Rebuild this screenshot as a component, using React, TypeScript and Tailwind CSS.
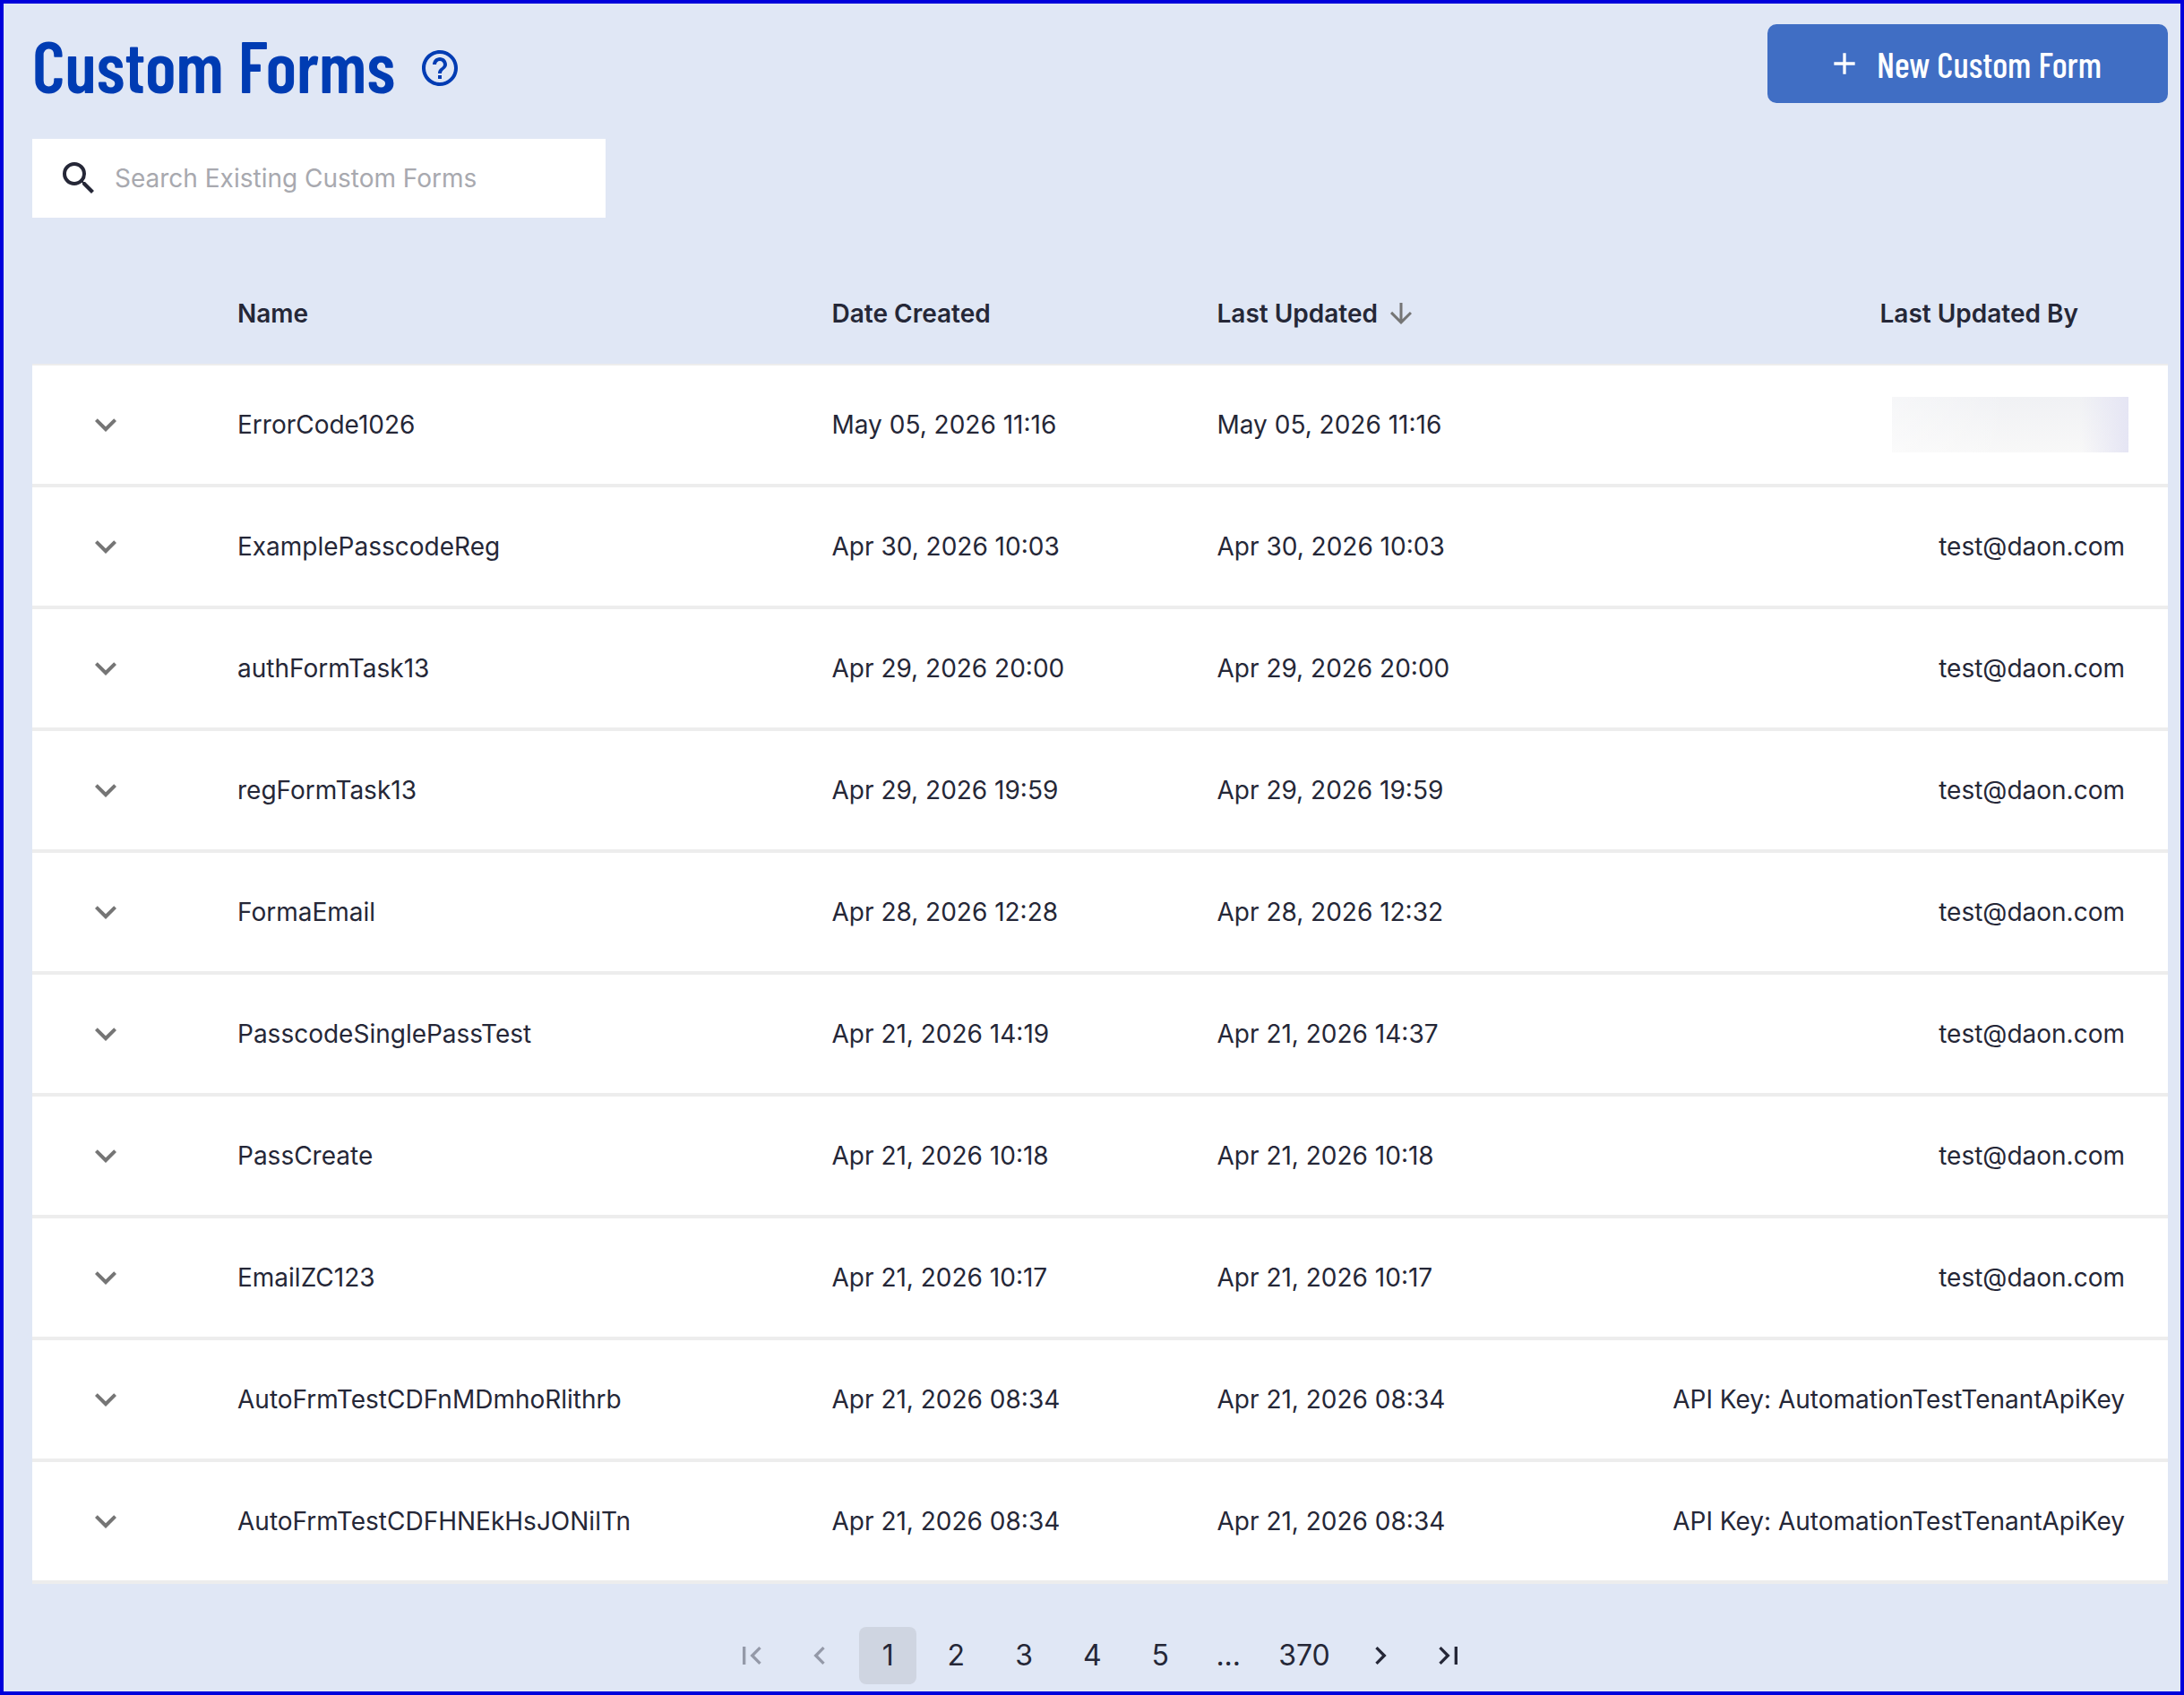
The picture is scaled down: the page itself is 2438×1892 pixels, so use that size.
import { useState } from 'react';
import {
  MdAdd,
  MdArrowDownward,
  MdChevronLeft,
  MdChevronRight,
  MdFirstPage,
  MdHelpOutline,
  MdKeyboardArrowDown,
  MdLastPage,
  MdSearch,
} from 'react-icons/md';

interface CustomForm {
  name: string;
  created: string;
  updated: string;
  // null when the user's address is hidden
  updatedBy: string | null;
}

const forms: CustomForm[] = [
  { name: 'ErrorCode1026', created: 'May 05, 2026 11:16', updated: 'May 05, 2026 11:16', updatedBy: null },
  { name: 'ExamplePasscodeReg', created: 'Apr 30, 2026 10:03', updated: 'Apr 30, 2026 10:03', updatedBy: 'test@daon.com' },
  { name: 'authFormTask13', created: 'Apr 29, 2026 20:00', updated: 'Apr 29, 2026 20:00', updatedBy: 'test@daon.com' },
  { name: 'regFormTask13', created: 'Apr 29, 2026 19:59', updated: 'Apr 29, 2026 19:59', updatedBy: 'test@daon.com' },
  { name: 'FormaEmail', created: 'Apr 28, 2026 12:28', updated: 'Apr 28, 2026 12:32', updatedBy: 'test@daon.com' },
  { name: 'PasscodeSinglePassTest', created: 'Apr 21, 2026 14:19', updated: 'Apr 21, 2026 14:37', updatedBy: 'test@daon.com' },
  { name: 'PassCreate', created: 'Apr 21, 2026 10:18', updated: 'Apr 21, 2026 10:18', updatedBy: 'test@daon.com' },
  { name: 'EmailZC123', created: 'Apr 21, 2026 10:17', updated: 'Apr 21, 2026 10:17', updatedBy: 'test@daon.com' },
  { name: 'AutoFrmTestCDFnMDmhoRlithrb', created: 'Apr 21, 2026 08:34', updated: 'Apr 21, 2026 08:34', updatedBy: 'API Key: AutomationTestTenantApiKey' },
  { name: 'AutoFrmTestCDFHNEkHsJONilTn', created: 'Apr 21, 2026 08:34', updated: 'Apr 21, 2026 08:34', updatedBy: 'API Key: AutomationTestTenantApiKey' },
];

const pages = [1, 2, 3, 4, 5];
const lastPage = 370;

const pageButton = 'flex h-16 min-w-16 items-center justify-center rounded-lg px-3 disabled:opacity-40';

function FormRow({ form }: { form: CustomForm }) {
  return (
    <tr className="h-[136px] bg-white">
      <td className="pl-[58px]">
        <button type="button" aria-label={`Expand ${form.name}`} className="block text-[#757575]">
          <MdKeyboardArrowDown className="size-12" />
        </button>
      </td>
      <td className="px-8">{form.name}</td>
      <td className="px-8">{form.created}</td>
      <td className="px-8">{form.updated}</td>
      <td className="pr-12 pl-8 text-right">
        {form.updatedBy ?? (
          <div className="-mr-1 ml-auto h-[62px] w-[264px] bg-linear-to-b from-[#f0f1f4] to-[#f8f8f8]">
            <div className="h-full bg-linear-to-r from-white/40 via-transparent via-50% to-transparent">
              <div className="h-full bg-linear-to-r from-transparent from-80% to-[#e5e5f4]" />
            </div>
          </div>
        )}
      </td>
    </tr>
  );
}

export default function App() {
  const [search, setSearch] = useState('');
  const [page, setPage] = useState(1);

  const visibleForms = forms.filter((form) => form.name.toLowerCase().includes(search.toLowerCase()));

  return (
    <main className="min-h-screen border-4 border-[#0000db] bg-[#e0e7f5] pt-[23px] pr-3.5 pb-2 pl-8 font-['Inter',sans-serif] text-[28px] leading-10 text-[#252737]">
      {/* Title and main action */}
      <header className="flex items-center justify-between">
        <div className="flex h-22 items-center gap-[26px] pt-2.5 text-[#003cb3]">
          <h1 className="pb-2 font-['Barlow_Condensed','Roboto',sans-serif] text-[80px] leading-20 font-semibold">
            Custom Forms
          </h1>
          <button type="button" aria-label="Help">
            <MdHelpOutline className="size-12" />
          </button>
        </div>
        <button
          type="button"
          className="flex h-22 w-[447px] items-center justify-center gap-4 rounded-[10px] bg-[#406ec4] pr-2 font-['Barlow_Condensed','Roboto',sans-serif] text-[40px] font-medium text-white"
        >
          <MdAdd className="size-10" />
          New Custom Form
        </button>
      </header>

      {/* Search */}
      <label className="mt-10 flex h-22 w-160 items-center gap-4 bg-white px-7">
        <MdSearch className="size-12 shrink-0" />
        <input
          type="text"
          aria-label="Search Existing Custom Forms"
          placeholder="Search Existing Custom Forms"
          value={search}
          onChange={(e) => setSearch(e.target.value)}
          className="w-full outline-none placeholder:text-[#a8a9af]"
        />
      </label>

      {/* Forms table */}
      <table className="mt-[51px] w-full table-fixed border-separate border-spacing-0 text-left">
        <colgroup>
          <col className="w-[197px]" />
          <col />
          <col className="w-[430px]" />
          <col className="w-[430px]" />
          <col />
        </colgroup>
        <thead>
          <tr className="h-[114px] [&>th]:border-b-2 [&>th]:border-[#ededed] [&>th]:font-semibold">
            <th aria-label="Expand" />
            <th className="px-8">Name</th>
            <th className="px-8">Date Created</th>
            <th className="px-8" aria-sort="descending">
              <button type="button" className="flex items-center gap-2">
                Last Updated
                <MdArrowDownward className="size-9 text-[#757575]" />
              </button>
            </th>
            <th className="pr-25 pl-8 text-right">Last Updated By</th>
          </tr>
        </thead>
        <tbody className="[&_td]:border-b-4 [&_td]:border-[#ededed]">
          {visibleForms.map((form) => (
            <FormRow key={form.name} form={form} />
          ))}
        </tbody>
      </table>

      {/* Pagination */}
      <nav aria-label="Pagination" className="mt-12 flex items-center justify-center gap-3 text-[32px]">
        <button type="button" aria-label="First page" disabled={page === 1} onClick={() => setPage(1)} className={pageButton}>
          <MdFirstPage className="size-10" />
        </button>
        <button type="button" aria-label="Previous page" disabled={page === 1} onClick={() => setPage(page - 1)} className={pageButton}>
          <MdChevronLeft className="size-10" />
        </button>
        {pages.map((n) => (
          <button
            key={n}
            type="button"
            aria-current={n === page ? 'page' : undefined}
            onClick={() => setPage(n)}
            className={`${pageButton} ${n === page ? 'bg-[#cfd5e1]' : ''}`}
          >
            {n}
          </button>
        ))}
        <span className="min-w-16 text-center">...</span>
        <button type="button" onClick={() => setPage(lastPage)} className={pageButton}>
          {lastPage}
        </button>
        <button type="button" aria-label="Next page" disabled={page === lastPage} onClick={() => setPage(page + 1)} className={pageButton}>
          <MdChevronRight className="size-10" />
        </button>
        <button type="button" aria-label="Last page" disabled={page === lastPage} onClick={() => setPage(lastPage)} className={pageButton}>
          <MdLastPage className="size-10" />
        </button>
      </nav>
    </main>
  );
}
